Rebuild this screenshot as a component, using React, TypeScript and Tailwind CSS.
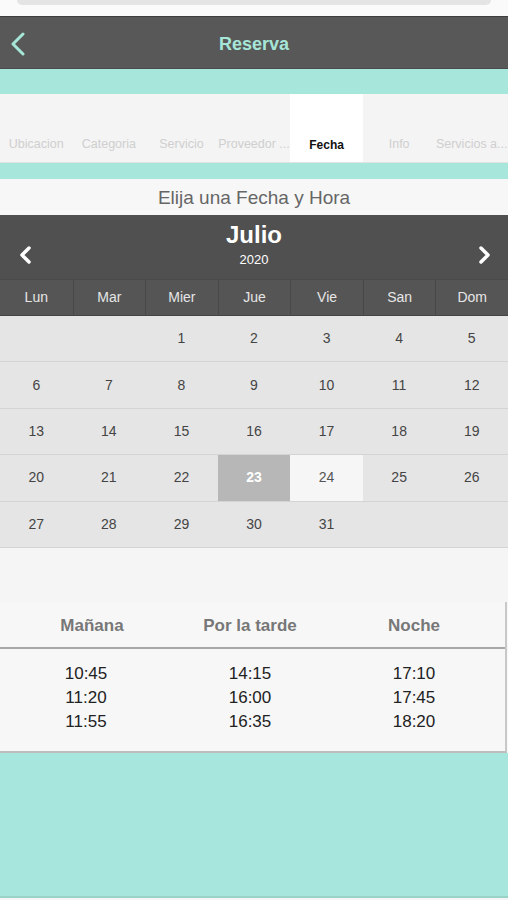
import React from "react";

const tabs = ["Ubicacion", "Categoria", "Servicio", "Proveedor ...", "Fecha", "Info", "Servicios a..."];
const days = ["Lun", "Mar", "Mier", "Jue", "Vie", "San", "Dom"];
const cells: (number | null)[] = [null, null, ...Array.from({ length: 31 }, (_, i) => i + 1), null, null];

export default function App() {
  return (
    <div className="w-[508px] h-[900px] bg-[#f7f7f7] flex flex-col overflow-hidden" style={{ fontFamily: '"Liberation Sans", Arial, sans-serif' }}>
      {/* top search remnant */}
      <div className="h-[16px] bg-[#fafafa] flex justify-center">
        <div className="w-[474px] h-[5px] bg-[#e4e4e4] rounded-b-[6px]" />
      </div>
      {/* nav header */}
      <div className="h-[53px] bg-[#585858] border-t border-[#3e3e3e] border-b border-b-[#4a4a4a] flex items-center relative">
        <svg className="absolute left-[10px] top-[15px]" width="16" height="24" viewBox="0 0 16 24">
          <path d="M13 2 L3 12 L13 22" fill="none" stroke="#a6e6d8" strokeWidth="3" strokeLinecap="round" strokeLinejoin="round" />
        </svg>
        <div className="flex-1 text-center text-[18px] font-bold text-[#a6e6d8] pt-[4px]">Reserva</div>
      </div>
      {/* teal band */}
      <div className="h-[25px] bg-[#a6e6db]" />
      {/* tab bar */}
      <div className="h-[68px] bg-[#f4f4f4] grid grid-cols-7">
        {tabs.map((t) => (
          <div key={t} className={`flex items-end justify-center pb-[8px] text-[12.5px] whitespace-nowrap overflow-hidden ${t === "Fecha" ? "bg-white text-[#111] font-bold text-[12px]" : "text-[#cfcfcf]"}`}>
            {t}
          </div>
        ))}
      </div>
      <div className="h-[1px] bg-[#e2e2e2]" />
      <div className="h-[16px] bg-[#a6e6db]" />
      {/* title */}
      <div className="h-[36px] bg-[#f7f7f7] flex items-center justify-center pt-[3px] text-[19px] text-[#666]">Elija una Fecha y Hora</div>
      {/* calendar header */}
      <div className="h-[64px] bg-[#505050] flex items-start relative">
        <svg className="absolute left-[18px] top-[30px]" width="16" height="20" viewBox="0 0 16 20">
          <path d="M11 3 L4 10 L11 17" fill="none" stroke="#ffffff" strokeWidth="3.5" strokeLinecap="round" strokeLinejoin="round" />
        </svg>
        <svg className="absolute right-[16px] top-[30px]" width="16" height="20" viewBox="0 0 16 20">
          <path d="M5 3 L12 10 L5 17" fill="none" stroke="#ffffff" strokeWidth="3.5" strokeLinecap="round" strokeLinejoin="round" />
        </svg>
        <div className="flex-1 flex flex-col items-center pt-[6px]">
          <div className="text-[24px] font-bold text-white leading-[28px]">Julio</div>
          <div className="text-[13px] text-white leading-[16px] mt-[3px]">2020</div>
        </div>
      </div>
      {/* weekday row */}
      <div className="h-[37px] bg-[#555555] grid grid-cols-7 border-t border-[#4a4a4a] border-b border-b-[#444]">
        {days.map((d, i) => (
          <div key={d} className={`flex items-center justify-center text-[14px] text-[#e6e6e6] ${i > 0 ? "border-l border-[#484848]" : ""}`}>
            {d}
          </div>
        ))}
      </div>
      {/* grid */}
      <div className="grid grid-cols-7 bg-[#e5e5e5]">
        {cells.map((c, i) => {
          const sel = c === 23;
          const next = c === 24;
          return (
            <div
              key={i}
              className={`h-[46.4px] flex items-center justify-center text-[14px] border-b border-[#d4d4d4] ${sel ? "bg-[#b7b7b7] text-white font-bold" : next ? "bg-[#f6f6f6] text-[#555]" : "text-[#444]"}`}
            >
              {c ?? ""}
            </div>
          );
        })}
      </div>
      {/* spacer */}
      <div className="h-[54px] bg-[#f5f5f5]" />
      {/* times table */}
      <div className="bg-[#f7f7f7] border-r-2 border-[#c8c8c8] mr-[1px] border-b-2 border-b-[#bdbdbd]">
        <div className="h-[47px] grid grid-cols-[164px_164px_164px] pl-[4px] items-center pt-[2px] border-b-2 border-[#a8a8a8]">
          <div className="text-center text-[17px] font-bold text-[#777] pl-[12px]">Mañana</div>
          <div className="text-center text-[17px] font-bold text-[#777]">Por la tarde</div>
          <div className="text-center text-[17px] font-bold text-[#777]">Noche</div>
        </div>
        <div className="h-[102px] grid grid-cols-[164px_164px_164px] pl-[4px] pt-[13px] text-[17px] leading-[24px] text-[#222]">
          <div className="flex flex-col items-center">
            <span>10:45</span><span>11:20</span><span>11:55</span>
          </div>
          <div className="flex flex-col items-center">
            <span>14:15</span><span>16:00</span><span>16:35</span>
          </div>
          <div className="flex flex-col items-center">
            <span>17:10</span><span>17:45</span><span>18:20</span>
          </div>
        </div>
      </div>
      {/* bottom teal */}
      <div className="flex-1 bg-[#a7e6dc] border-b-2 border-[#99d3c6]" />
      <div className="h-[2px] bg-[#f5f5f5]" />
    </div>
  );
}
